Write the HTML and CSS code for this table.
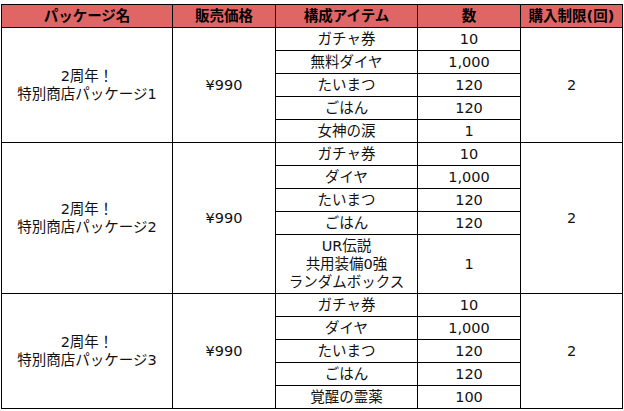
FILE: index.html
```html
<!DOCTYPE html>
<html lang="ja">
<head>
<meta charset="utf-8">
<title>2周年 特別商店パッケージ</title>
<link rel="stylesheet" href="styles.css">
</head>
<body>
<table class="packages">
  <colgroup>
    <col class="c-name">
    <col class="c-price">
    <col class="c-item">
    <col class="c-qty">
    <col class="c-limit">
  </colgroup>
  <thead>
    <tr class="head">
      <th>パッケージ名</th>
      <th>販売価格</th>
      <th>構成アイテム</th>
      <th>数</th>
      <th>購入制限(回)</th>
    </tr>
  </thead>
  <tbody>
    <tr class="row">
      <td rowspan="5" class="pkg">2周年！<br>特別商店パッケージ1</td>
      <td rowspan="5">¥990</td>
      <td>ガチャ券</td>
      <td>10</td>
      <td rowspan="5">2</td>
    </tr>
    <tr class="row"><td>無料ダイヤ</td><td>1,000</td></tr>
    <tr class="row"><td>たいまつ</td><td>120</td></tr>
    <tr class="row"><td>ごはん</td><td>120</td></tr>
    <tr class="row"><td>女神の涙</td><td>1</td></tr>

    <tr class="row">
      <td rowspan="5" class="pkg">2周年！<br>特別商店パッケージ2</td>
      <td rowspan="5">¥990</td>
      <td>ガチャ券</td>
      <td>10</td>
      <td rowspan="5">2</td>
    </tr>
    <tr class="row"><td>ダイヤ</td><td>1,000</td></tr>
    <tr class="row"><td>たいまつ</td><td>120</td></tr>
    <tr class="row"><td>ごはん</td><td>120</td></tr>
    <tr class="row tall"><td class="multi">UR伝説<br>共用装備0強<br>ランダムボックス</td><td>1</td></tr>

    <tr class="row">
      <td rowspan="5" class="pkg">2周年！<br>特別商店パッケージ3</td>
      <td rowspan="5">¥990</td>
      <td>ガチャ券</td>
      <td>10</td>
      <td rowspan="5">2</td>
    </tr>
    <tr class="row"><td>ダイヤ</td><td>1,000</td></tr>
    <tr class="row"><td>たいまつ</td><td>120</td></tr>
    <tr class="row"><td>ごはん</td><td>120</td></tr>
    <tr class="row"><td>覚醒の霊薬</td><td>100</td></tr>
  </tbody>
</table>
</body>
</html>
```
FILE: styles.css
```css
html, body {
  margin: 0;
  padding: 0;
  background: #ffffff;
}

body {
  font-family: "DejaVu Sans", "Noto Sans CJK JP", sans-serif;
  font-size: 14.5px;
  color: #111111;
}

.packages {
  margin: 4px 0 0 1px;
  border-collapse: collapse;
  table-layout: fixed;
  width: 621px;
}

.c-name { width: 171px; }
.c-price { width: 103px; }
.c-item { width: 142px; }
.c-qty { width: 103px; }
.c-limit { width: 102px; }

.packages th,
.packages td {
  border: 1px solid #000000;
  padding: 0;
  text-align: center;
  vertical-align: middle;
  white-space: nowrap;
  line-height: 18px;
}

.head {
  height: 23px;
}

.head th {
  background: #e06666;
  font-weight: bold;
  color: #000000;
}

.row {
  height: 23px;
}

.row.tall {
  height: 59px;
}

.pkg {
  line-height: 19px;
}

.multi {
  line-height: 18.5px;
}
```
